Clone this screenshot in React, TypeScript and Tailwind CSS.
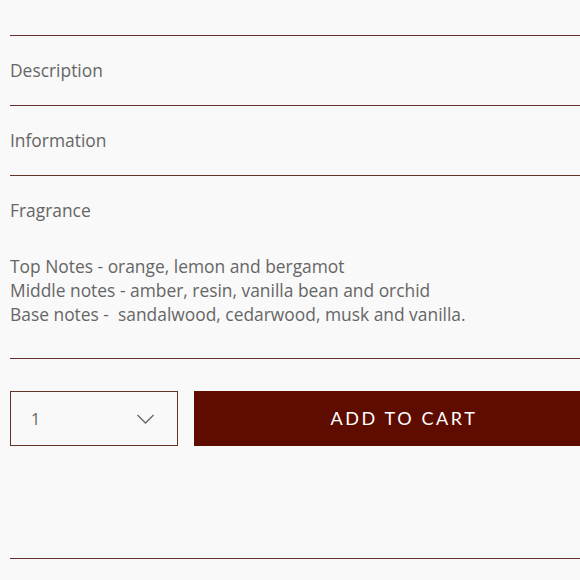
const sections = ["Description", "Information"];

export default function App() {
  return (
    <div className="w-[580px] h-[580px] overflow-hidden bg-[#f9f9f9] font-['Open_Sans',sans-serif] text-[#666]">
      <div className="w-[604px] ml-[10px]">
        <div className="h-[36px] border-b border-[#633128]" />
        {sections.map((s) => (
          <div key={s} className="h-[70px] flex items-center border-b border-[#633128] text-[17.4px]">
            {s}
          </div>
        ))}
        <div className="border-b border-[#633128] pb-[32px]">
          <div className="h-[69px] flex items-center text-[17.4px]">Fragrance</div>
          <p className="text-[17.4px] leading-[24px] mt-[9px] whitespace-pre">
            Top Notes - orange, lemon and bergamot{"\n"}
            Middle notes - amber, resin, vanilla bean and orchid{"\n"}
            Base notes -  sandalwood, cedarwood, musk and vanilla.
          </p>
        </div>
        <div className="flex gap-[16px] mt-[32px]">
          <div className="w-[168px] h-[55px] border border-[#633128] flex items-center justify-between pl-[20px] pr-[23px] text-[16px]">
            <span>1</span>
            <svg width="17" height="10" viewBox="0 0 17 10" fill="none" stroke="#666" strokeWidth="1.3">
              <polyline points="0.5,1 8.5,9 16.5,1" />
            </svg>
          </div>
          <button className="flex-1 h-[55px] bg-[#5f0c00] text-white text-[18px] tracking-[2.6px] font-['Lato',sans-serif]">
            ADD TO CART
          </button>
        </div>
        <div className="h-[113px] border-b border-[#633128]" />
      </div>
    </div>
  );
}
